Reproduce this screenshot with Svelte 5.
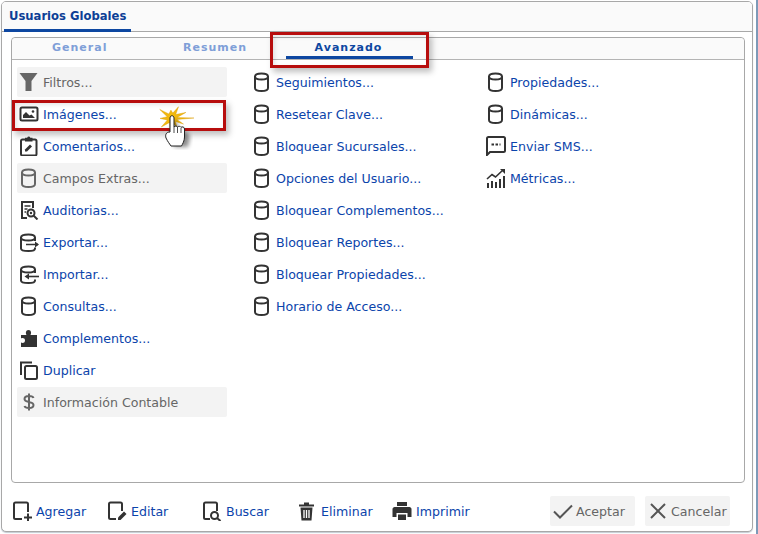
<script>
  const db = "db";

  const colA = [
    { label: "Filtros...", icon: "filter", off: true },
    { label: "Imágenes...", icon: "image" },
    { label: "Comentarios...", icon: "clipboard" },
    { label: "Campos Extras...", icon: db, off: true },
    { label: "Auditorias...", icon: "audit" },
    { label: "Exportar...", icon: "export" },
    { label: "Importar...", icon: "import" },
    { label: "Consultas...", icon: db },
    { label: "Complementos...", icon: "puzzle" },
    { label: "Duplicar", icon: "copy" },
    { label: "Información Contable", icon: "dollar", off: true },
  ];
  const colB = [
    "Seguimientos...",
    "Resetear Clave...",
    "Bloquear Sucursales...",
    "Opciones del Usuario...",
    "Bloquear Complementos...",
    "Bloquear Reportes...",
    "Bloquear Propiedades...",
    "Horario de Acceso...",
  ].map((label) => ({ label, icon: db }));
  const colC = [
    { label: "Propiedades...", icon: db },
    { label: "Dinámicas...", icon: db },
    { label: "Enviar SMS...", icon: "sms" },
    { label: "Métricas...", icon: "chart" },
  ];
  const columns = [
    { items: colA, cls: "col-a" },
    { items: colB, cls: "col-b" },
    { items: colC, cls: "col-c" },
  ];
  const tools = [
    { label: "Agregar", icon: "add" },
    { label: "Editar", icon: "edit" },
    { label: "Buscar", icon: "search" },
    { label: "Eliminar", icon: "trash" },
    { label: "Imprimir", icon: "print" },
  ];

  // spiky click burst: [angle in degrees, spike length]
  const spikes = [[0, 22], [28, 13], [62, 10], [100, 11], [140, 14], [178, 12], [215, 15], [262, 8], [300, 13], [338, 15]];
  const burst = spikes
    .flatMap(([a, r]) => {
      const t = (a * Math.PI) / 180;
      const m = t + 0.3;
      return [
        `${(13 + r * Math.cos(t)).toFixed(1)},${(13 + r * Math.sin(t)).toFixed(1)}`,
        `${(13 + 5 * Math.cos(m)).toFixed(1)},${(13 + 5 * Math.sin(m)).toFixed(1)}`,
      ];
    })
    .join(" ");
</script>

{#snippet glyph(name)}
  <svg class="icon" viewBox="0 0 20 20" width="20" height="20" aria-hidden="true">
    {#if name === "db"}
      <g fill="none" stroke="currentColor" stroke-width="2">
        <path d="M3 4.500C3 2.500 6 1.500 9.500 1.500s6.500 1 6.500 3V16c0 2-3 3-6.500 3S3 18 3 16z" />
        <path d="M3 4.500c0 2 3 3 6.500 3s6.500-1 6.500-3" />
      </g>
    {:else if name === "filter"}
      <path fill="currentColor" d="M0.500 1h18l-6 8h-6zM6.500 9h6v10h-6z" />
    {:else if name === "image"}
      <rect x="1.500" y="3.500" width="17" height="13" rx="1.500" fill="none" stroke="currentColor" stroke-width="2" />
      <path fill="currentColor" d="M4 14v-3l3-3 3.500 3.500 2-1 3.500 3.500z" />
      <circle cx="14" cy="7.500" r="1.300" fill="currentColor" />
    {:else if name === "clipboard"}
      <rect x="2" y="3.500" width="15.500" height="16" rx="1.500" fill="none" stroke="currentColor" stroke-width="2" />
      <path fill="currentColor" d="M6 1.800h2.200a1.600 1.600 0 0 1 3.100 0h2.200v3.700H6z" />
      <path fill="currentColor" d="M6 15.500v-2l5-5 2 2-5 5z" />
    {:else if name === "audit"}
      <path fill="none" stroke="currentColor" stroke-width="2" d="M8 18H3V2h11v6" />
      <path fill="none" stroke="currentColor" stroke-width="1.500" d="M5.500 6h6M5.500 9h3M5.500 12h1.500" />
      <circle cx="12" cy="13" r="3.500" fill="none" stroke="currentColor" stroke-width="2" />
      <circle cx="12" cy="13" r="1.200" fill="currentColor" />
      <path stroke="currentColor" stroke-width="2" d="M14.500 15.500l4 4" />
    {:else if name === "export"}
      <g fill="none" stroke="currentColor" stroke-width="2">
        <path d="M16 9V5.500C16 3.500 13 2.500 9.500 2.500S2 3.500 2 5.500v11c0 1.500 3 2.500 7.500 2.500 3 0 6.500-.5 6.500-2.500v-1" />
        <path d="M2 5.500c0 2 3.500 3 7.500 3s6.500-1 6.500-3" />
        <path stroke-width="1.600" d="M7 12.500h12" />
      </g>
      <path fill="currentColor" d="M16 9.500l4 3-4 3z" />
    {:else if name === "import"}
      <g fill="none" stroke="currentColor" stroke-width="2">
        <path d="M16 9V5.500C16 3.500 13 2.500 9.500 2.500S2 3.500 2 5.500v11c0 1.500 3 2.500 7.500 2.500 3 0 6.500-.5 6.500-2.500v-1" />
        <path d="M2 5.500c0 2 3.500 3 7.500 3s6.500-1 6.500-3" />
        <path stroke-width="1.600" d="M9 12.500h11" />
      </g>
      <path fill="currentColor" d="M10 9.500l-4.500 3 4.500 3z" />
    {:else if name === "puzzle"}
      <path fill="currentColor" d="M2 7h5.500C6.500 5.500 6.500 2 9.500 2s3 3.500 2 5H18v12H2v-4.500c1.500 1 4 .5 4-2s-2.500-3-4-2z" />
    {:else if name === "copy"}
      <path fill="none" stroke="currentColor" stroke-width="2" d="M2 15V2.500h11" />
      <rect x="6" y="6" width="12" height="13" rx="1.500" fill="none" stroke="currentColor" stroke-width="2" />
    {:else if name === "dollar"}
      <path fill="none" stroke="currentColor" stroke-width="2" d="M14.500 6C14 4.500 12.500 4 10 4S5.500 5 5.500 7s2 2.500 4.500 3 4.500 1 4.500 3-2 3-4.500 3-4-.5-4.500-2M10 1.500v17" />
    {:else if name === "sms"}
      <path fill="none" stroke="currentColor" stroke-width="2" d="M1 19V2.500C1 1.800 1.500 1 2.500 1h15c1 0 1.500.8 1.500 1.500v12c0 .7-.5 1.500-1.500 1.500H4z" />
      <path stroke="currentColor" stroke-width="2" stroke-dasharray="2.500 1.500" d="M5.500 8.500h9" />
    {:else if name === "chart"}
      <path fill="currentColor" d="M1 15h2v5H1zM5 13h2v7H5zM9 14h2v6H9zM13 11h2v9h-2zM17 8h2v12h-2z" />
      <path fill="none" stroke="currentColor" stroke-width="1.600" d="M1 11l5-4.500 3.500 2.500L17 2" />
      <path fill="currentColor" d="M14 1h5v5z" />
    {:else if name === "add"}
      <path fill="none" stroke="currentColor" stroke-width="2" d="M10 18H3.500C2.500 18 2 17.500 2 16.500V3c0-1 .5-1.500 1.500-1.500h11c1 0 1.500.5 1.500 1.500v8" />
      <path stroke="currentColor" stroke-width="2" d="M12 16.500h8M16 12.500v8" />
    {:else if name === "edit"}
      <path fill="none" stroke="currentColor" stroke-width="2" d="M9 18H3.500C2.500 18 2 17.500 2 16.500V3c0-1 .5-1.500 1.500-1.500h10c1 0 1.500.5 1.500 1.500v7" />
      <path fill="currentColor" d="M11 19v-2.500l6-6 2.500 2.500-6 6z" />
    {:else if name === "search"}
      <path fill="none" stroke="currentColor" stroke-width="2" d="M8 18H3.500C2.500 18 2 17.500 2 16.500V3c0-1 .5-1.500 1.500-1.500h10c1 0 1.500.5 1.500 1.500v7" />
      <circle cx="12.500" cy="14.500" r="3.500" fill="none" stroke="currentColor" stroke-width="2" />
      <path stroke="currentColor" stroke-width="2" d="M15 17l3.500 3" />
    {:else if name === "trash"}
      <path fill="currentColor" d="M2 3.500h5V1.500h5v2h5v2H2zM3.500 6.500h12l-1 13H4.500z" />
      <path stroke="#fff" stroke-width="1.300" d="M7 9v8M9.500 9v8M12 9v8" />
    {:else if name === "print"}
      <path fill="currentColor" d="M5 1h10v4H5zM2.500 6h15c1 0 2 1 2 2v8h-4v-4h-11v4h-4V8c0-1 1-2 2-2zM6 13.500h8V19H6z" />
    {:else if name === "check"}
      <path fill="none" stroke="currentColor" stroke-width="2" d="M1 10.500l6 6L19 4.500" />
    {:else if name === "close"}
      <path fill="none" stroke="currentColor" stroke-width="2" d="M3 3l14 14M17 3L3 17" />
    {/if}
  </svg>
{/snippet}

<div class="page">
  <div class="window">
    <header class="top">
      <span class="top-tab">Usuarios Globales</span>
    </header>

    <section class="panel">
      <nav class="tabs">
        <span class="tab tab-general">General</span>
        <span class="tab tab-resumen">Resumen</span>
        <span class="tab tab-avanzado">Avanzado</span>
      </nav>
      <div class="cols">
        {#each columns as col}
          <ul class={col.cls}>
            {#each col.items as item}
              <li class:off={item.off}>
                {@render glyph(item.icon)}
                <span>{item.label}</span>
              </li>
            {/each}
          </ul>
        {/each}
      </div>
    </section>

    <footer class="bottom">
      <div class="tools">
        {#each tools as tool}
          <span class="tool">
            {@render glyph(tool.icon)}
            <span>{tool.label}</span>
          </span>
        {/each}
      </div>
      <div class="actions">
        <span class="btn">{@render glyph("check")}<span>Aceptar</span></span>
        <span class="btn">{@render glyph("close")}<span>Cancelar</span></span>
      </div>
    </footer>

    <!-- tutorial marks painted over the screenshot -->
    <div class="mark mark-tab"></div>
    <div class="mark mark-row"></div>
    <svg class="pointer" viewBox="0 0 40 50" width="40" height="50" aria-hidden="true">
      <defs>
        <filter id="soft"><feGaussianBlur stdDeviation="2" /></filter>
      </defs>
      <polygon fill="#f2b90f" stroke="#d89a00" stroke-width=".4" points={burst} />
      <g transform="translate(-3 -4)">
        <path d="M12 21l3-6 2 1 1 9 5 1 5 2 2 4-2 10H15L9 34z" fill="#000" opacity=".45" filter="url(#soft)" transform="translate(4 4)" />
        <path fill="#fff" stroke="#222" d="M14 31V17c0-3 4-3 4 0v9c1-1.500 3-1 3.500 0 1-1 3-.8 3.500.3 1-.8 3.500-.5 3.500 1.700v8c0 4-2 7-3 9H15c-2-3-3-4-5-8-1-3 0-6 4-6z" />
        <path stroke="#222" stroke-width=".8" d="M18 26v6M21.500 26v6M25 27v5" />
      </g>
    </svg>
  </div>
  <div class="edge"></div>
</div>

<style>
  :global(body) {
    margin: 0;
    background: #fff;
  }
  .page {
    display: flex;
    height: 534px;
    overflow: hidden;
  }
  .edge {
    width: 2px;
    margin-left: auto;
    background: #7e9ab8;
  }
  .window {
    position: relative;
    flex: none;
    width: 752px;
    height: 531px;
    margin: 1px 0 0 1px;
    box-sizing: border-box;
    border: 1px solid #a8a8a8;
    border-radius: 5px;
    box-shadow: 0 1px 1px #c4ccd4;
    background: #fff;
    display: flex;
    flex-direction: column;
    font-family: "DejaVu Sans", Verdana, sans-serif;
    font-size: 12.6px;
    color: #0b44ab;
    overflow: hidden;
  }
  .top {
    height: 29px;
    flex: none;
    border-bottom: 1px solid #a8a8a8;
    background: #fafafa;
    display: flex;
  }
  .top-tab {
    width: 127px;
    margin-left: 2px;
    box-sizing: border-box;
    padding: 7px 0 0 5px;
    height: 30px;
    border-bottom: 3px solid #0d47a1;
    font-size: 11.6px;
    font-weight: bold;
    color: #0d3f96;
  }
  .panel {
    flex: none;
    height: 446px;
    margin: 5px 7px 0 9px;
    box-sizing: border-box;
    border: 1px solid #a8a8a8;
    border-radius: 4px;
  }
  .tabs {
    height: 21px;
    border-bottom: 1px solid #b4b4b4;
    background: #fafafa;
    display: flex;
    font-size: 11px;
    font-weight: bold;
    letter-spacing: 1px;
    border-radius: 4px 4px 0 0;
  }
  .tab {
    padding-top: 3px;
    color: #7f9fd8;
  }
  .tab-general {
    margin-left: 40px;
    width: 131px;
  }
  .tab-resumen {
    width: 103px;
  }
  .tab-avanzado {
    width: 127px;
    height: 21px;
    box-sizing: border-box;
    padding-right: 2px;
    text-align: center;
    border-bottom: 3px solid #0d47a1;
    color: #0d47a1;
  }
  .cols {
    display: flex;
    padding: 7px 0 0 5px;
  }
  ul {
    list-style: none;
    margin: 0;
    padding: 0;
    display: flex;
    flex-direction: column;
    gap: 2px;
  }
  .col-a {
    width: 210px;
  }
  .col-b {
    width: 234px;
    margin-left: 23px;
  }
  .col-c {
    margin-left: 0;
  }
  li {
    height: 30px;
    display: flex;
    align-items: center;
    gap: 4px;
    padding-left: 2px;
    border-radius: 2px;
  }
  li.off {
    background: #f3f3f3;
    color: #666;
  }
  .icon {
    flex: none;
    color: #333;
  }
  li.off .icon {
    color: #666;
  }
  .bottom {
    flex: 1;
    display: flex;
    align-items: flex-start;
    padding: 13px 0 0 10px;
  }
  .tools {
    display: flex;
  }
  .tool {
    width: 95px;
    height: 30px;
    display: flex;
    align-items: center;
    gap: 4px;
  }
  .actions {
    display: flex;
    gap: 10px;
    margin-left: 63px;
  }
  .btn {
    width: 85px;
    height: 30px;
    box-sizing: border-box;
    padding-left: 3px;
    display: flex;
    align-items: center;
    gap: 3px;
    background: #f3f3f3;
    border-radius: 2px;
    color: #666;
  }
  .btn .icon {
    color: #555;
  }
  .mark {
    position: absolute;
    box-sizing: border-box;
    border: 3px solid #b70d0d;
    box-shadow: 3px 4px 6px rgba(0, 0, 0, 0.25), inset 2px 2px 4px rgba(0, 0, 0, 0.1);
  }
  .mark-tab {
    left: 268px;
    top: 30px;
    width: 159px;
    height: 36px;
  }
  .mark-row {
    left: 10px;
    top: 98px;
    width: 214px;
    height: 31px;
  }
  .pointer {
    position: absolute;
    left: 157px;
    top: 103px;
  }
</style>
